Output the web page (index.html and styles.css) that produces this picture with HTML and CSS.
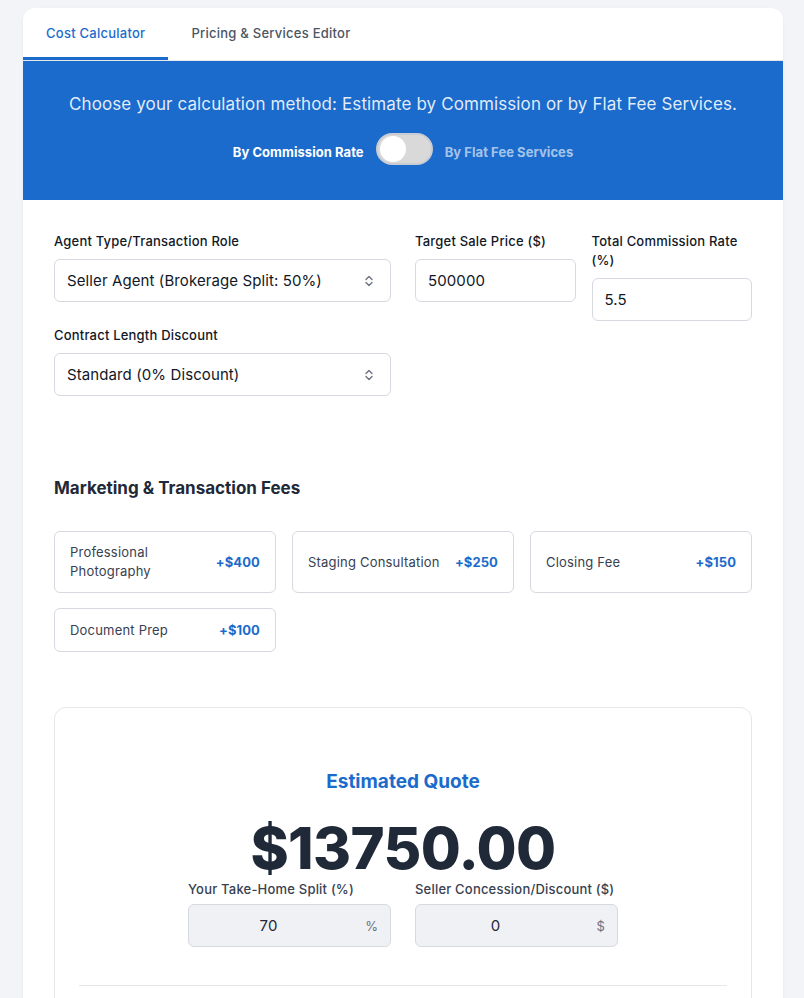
FILE: index.html
```html
<!DOCTYPE html>
<html lang="en">
<head>
<meta charset="utf-8">
<title>Cost Calculator</title>
<link rel="stylesheet" href="styles.css">
</head>
<body>
<div class="card">
  <nav class="tabs">
    <div class="tab active">Cost Calculator</div>
    <div class="tab">Pricing &amp; Services Editor</div>
  </nav>

  <section class="banner">
    <p class="banner-text">Choose your calculation method: Estimate by Commission or by Flat Fee Services.</p>
    <div class="mode-row">
      <span class="mode on">By Commission Rate</span>
      <span class="switch"><span class="knob"></span></span>
      <span class="mode off">By Flat Fee Services</span>
    </div>
  </section>

  <section class="form">
    <div class="col">
      <div class="field">
        <label class="label">Agent Type/Transaction Role</label>
        <div class="select">
          <span>Seller Agent (Brokerage Split: 50%)</span>
          <svg class="chev" width="10" height="14" viewBox="0 0 10 14"><path d="M2 5.5 L5 2.5 L8 5.5 M2 8.5 L5 11.5 L8 8.5" fill="none" stroke="#6b7280" stroke-width="1.4" stroke-linecap="round" stroke-linejoin="round"/></svg>
        </div>
      </div>
      <div class="field">
        <label class="label">Contract Length Discount</label>
        <div class="select">
          <span>Standard (0% Discount)</span>
          <svg class="chev" width="10" height="14" viewBox="0 0 10 14"><path d="M2 5.5 L5 2.5 L8 5.5 M2 8.5 L5 11.5 L8 8.5" fill="none" stroke="#6b7280" stroke-width="1.4" stroke-linecap="round" stroke-linejoin="round"/></svg>
        </div>
      </div>
    </div>
    <div class="subgrid">
      <div class="field">
        <label class="label">Target Sale Price ($)</label>
        <div class="input">500000</div>
      </div>
      <div class="field">
        <label class="label">Total Commission Rate (%)</label>
        <div class="input">5.5</div>
      </div>
    </div>
  </section>

  <section class="fees">
    <h2 class="fees-title">Marketing &amp; Transaction Fees</h2>
    <div class="fee-grid">
      <div class="fee"><span class="fee-name">Professional Photography</span><span class="fee-price">+$400</span></div>
      <div class="fee"><span class="fee-name">Staging Consultation</span><span class="fee-price">+$250</span></div>
      <div class="fee"><span class="fee-name">Closing Fee</span><span class="fee-price">+$150</span></div>
      <div class="fee"><span class="fee-name">Document Prep</span><span class="fee-price">+$100</span></div>
    </div>
  </section>

  <section class="result">
    <h3 class="result-title">Estimated Quote</h3>
    <div class="total">$13750.00</div>
    <div class="adjust">
      <div class="field">
        <label class="label soft">Your Take-Home Split (%)</label>
        <div class="input gray"><span class="val">70</span><span class="suffix">%</span></div>
      </div>
      <div class="field">
        <label class="label soft">Seller Concession/Discount ($)</label>
        <div class="input gray"><span class="val">0</span><span class="suffix">$</span></div>
      </div>
    </div>
    <div class="divider"></div>
    <div class="spacer"></div>
  </section>
</div>
</body>
</html>
```

FILE: styles.css
```css
* { box-sizing: border-box; }
html, body { margin: 0; }
body {
  background: #f3f4f8;
  font-family: Inter, "Noto Sans", "Liberation Sans", sans-serif;
  color: #111827;
  padding: 8px 21px 40px 23px;
}
.card {
  background: #fff;
  border-radius: 12px;
  overflow: hidden;
  box-shadow: 0 1px 3px rgba(15, 23, 42, 0.06);
}
.tabs {
  display: flex;
  border-bottom: 1px solid #e5e7eb;
}
.tab {
  height: 52px;
  padding: 0 23px;
  display: flex;
  align-items: center;
  font-size: 13px;
  font-weight: 500;
  letter-spacing: 0.25px;
  color: #4b5563;
  border-bottom: 3px solid transparent;
}
.tab.active {
  color: #1b6bcc;
  border-bottom-color: #1b6bcc;
}
.banner {
  background: #1b6bcc;
  padding: 31px 24px 29px;
  text-align: center;
}
.banner-text {
  margin: 0 0 17px;
  font-size: 17px;
  line-height: 24px;
  letter-spacing: 0.11px;
  color: rgba(255, 255, 255, 0.88);
}
.mode-row {
  display: flex;
  justify-content: center;
  align-items: center;
  gap: 12px;
}
.mode {
  font-size: 13px;
  font-weight: 700;
  letter-spacing: 0.05px;
}
.mode.on { color: #fff; }
.mode.off { color: rgba(255, 255, 255, 0.62); }
.switch {
  width: 57px;
  height: 32px;
  margin-bottom: 6px;
  border-radius: 16px;
  background: #d9d9d9;
  border: 2px solid #c9ccd2;
  display: flex;
  align-items: center;
  padding-left: 2px;
}
.knob {
  width: 26px;
  height: 26px;
  border-radius: 50%;
  background: #fff;
}
.form {
  display: grid;
  grid-template-columns: 1fr 1fr;
  column-gap: 24px;
  padding: 32px 31px 32px;
  align-items: start;
}
.col {
  display: flex;
  flex-direction: column;
  gap: 24px;
}
.subgrid {
  display: grid;
  grid-template-columns: 1fr 1fr;
  column-gap: 16px;
  align-items: start;
}
.field {
  display: flex;
  flex-direction: column;
}
.label {
  font-size: 13px;
  line-height: 19px;
  font-weight: 500;
  letter-spacing: 0.2px;
  color: #111827;
  margin-bottom: 8px;
}
.select, .input {
  height: 43px;
  border: 1px solid #d6d9df;
  border-radius: 6px;
  display: flex;
  align-items: center;
  padding: 0 12px;
  font-size: 15px;
  letter-spacing: 0.1px;
  color: #111827;
  background: #fff;
}
.select { justify-content: space-between; padding-right: 16px; }
.chev { display: block; }
.fees {
  padding: 48px 31px 0;
}
.fees-title {
  margin: 0 0 31px;
  font-size: 17px;
  line-height: 24px;
  font-weight: 700;
  color: #1f2937;
}
.fee-grid {
  display: grid;
  grid-template-columns: repeat(3, 1fr);
  column-gap: 16px;
  row-gap: 15px;
}
.fee {
  border: 1px solid #d6d9df;
  border-radius: 6px;
  padding: 12px 15px;
  display: flex;
  align-items: center;
  justify-content: space-between;
  gap: 12px;
  font-size: 13px;
  line-height: 18px;
  letter-spacing: 0.2px;
}
.fee-name { color: #374151; }
.fee-price { color: #1b6bcc; font-weight: 700; white-space: nowrap; letter-spacing: 0.1px; }
.fee:first-child .fee-name { max-width: 110px; line-height: 19px; }
.fee:first-child { padding-top: 11px; padding-bottom: 11px; }
.result {
  margin: 55px 31px 0;
  border: 1px solid #e5e7eb;
  border-radius: 12px;
  padding: 62px 24px 0;
  text-align: center;
}
.result-title {
  margin: 0 0 25px;
  font-size: 19px;
  line-height: 24px;
  font-weight: 700;
  color: #1b6bcc;
}
.total {
  font-size: 58px;
  line-height: 58px;
  font-weight: 800;
  letter-spacing: -0.6px;
  color: #1f2937;
  margin-bottom: 3px;
}
.adjust {
  display: grid;
  grid-template-columns: 203px 203px;
  column-gap: 24px;
  justify-content: center;
  text-align: left;
}
.label.soft {
  color: #374151;
  margin-bottom: 5px;
}
.input.gray {
  background: #f0f1f5;
  position: relative;
  justify-content: center;
  padding: 0 54px 0 12px;
}
.val { color: #1f2937; }
.suffix {
  position: absolute;
  right: 12px;
  top: 50%;
  transform: translateY(-50%);
  font-size: 13px;
  color: #6b7280;
}
.divider {
  margin-top: 38px;
  border-top: 1px solid #e5e7eb;
}
.spacer { height: 60px; }
```
